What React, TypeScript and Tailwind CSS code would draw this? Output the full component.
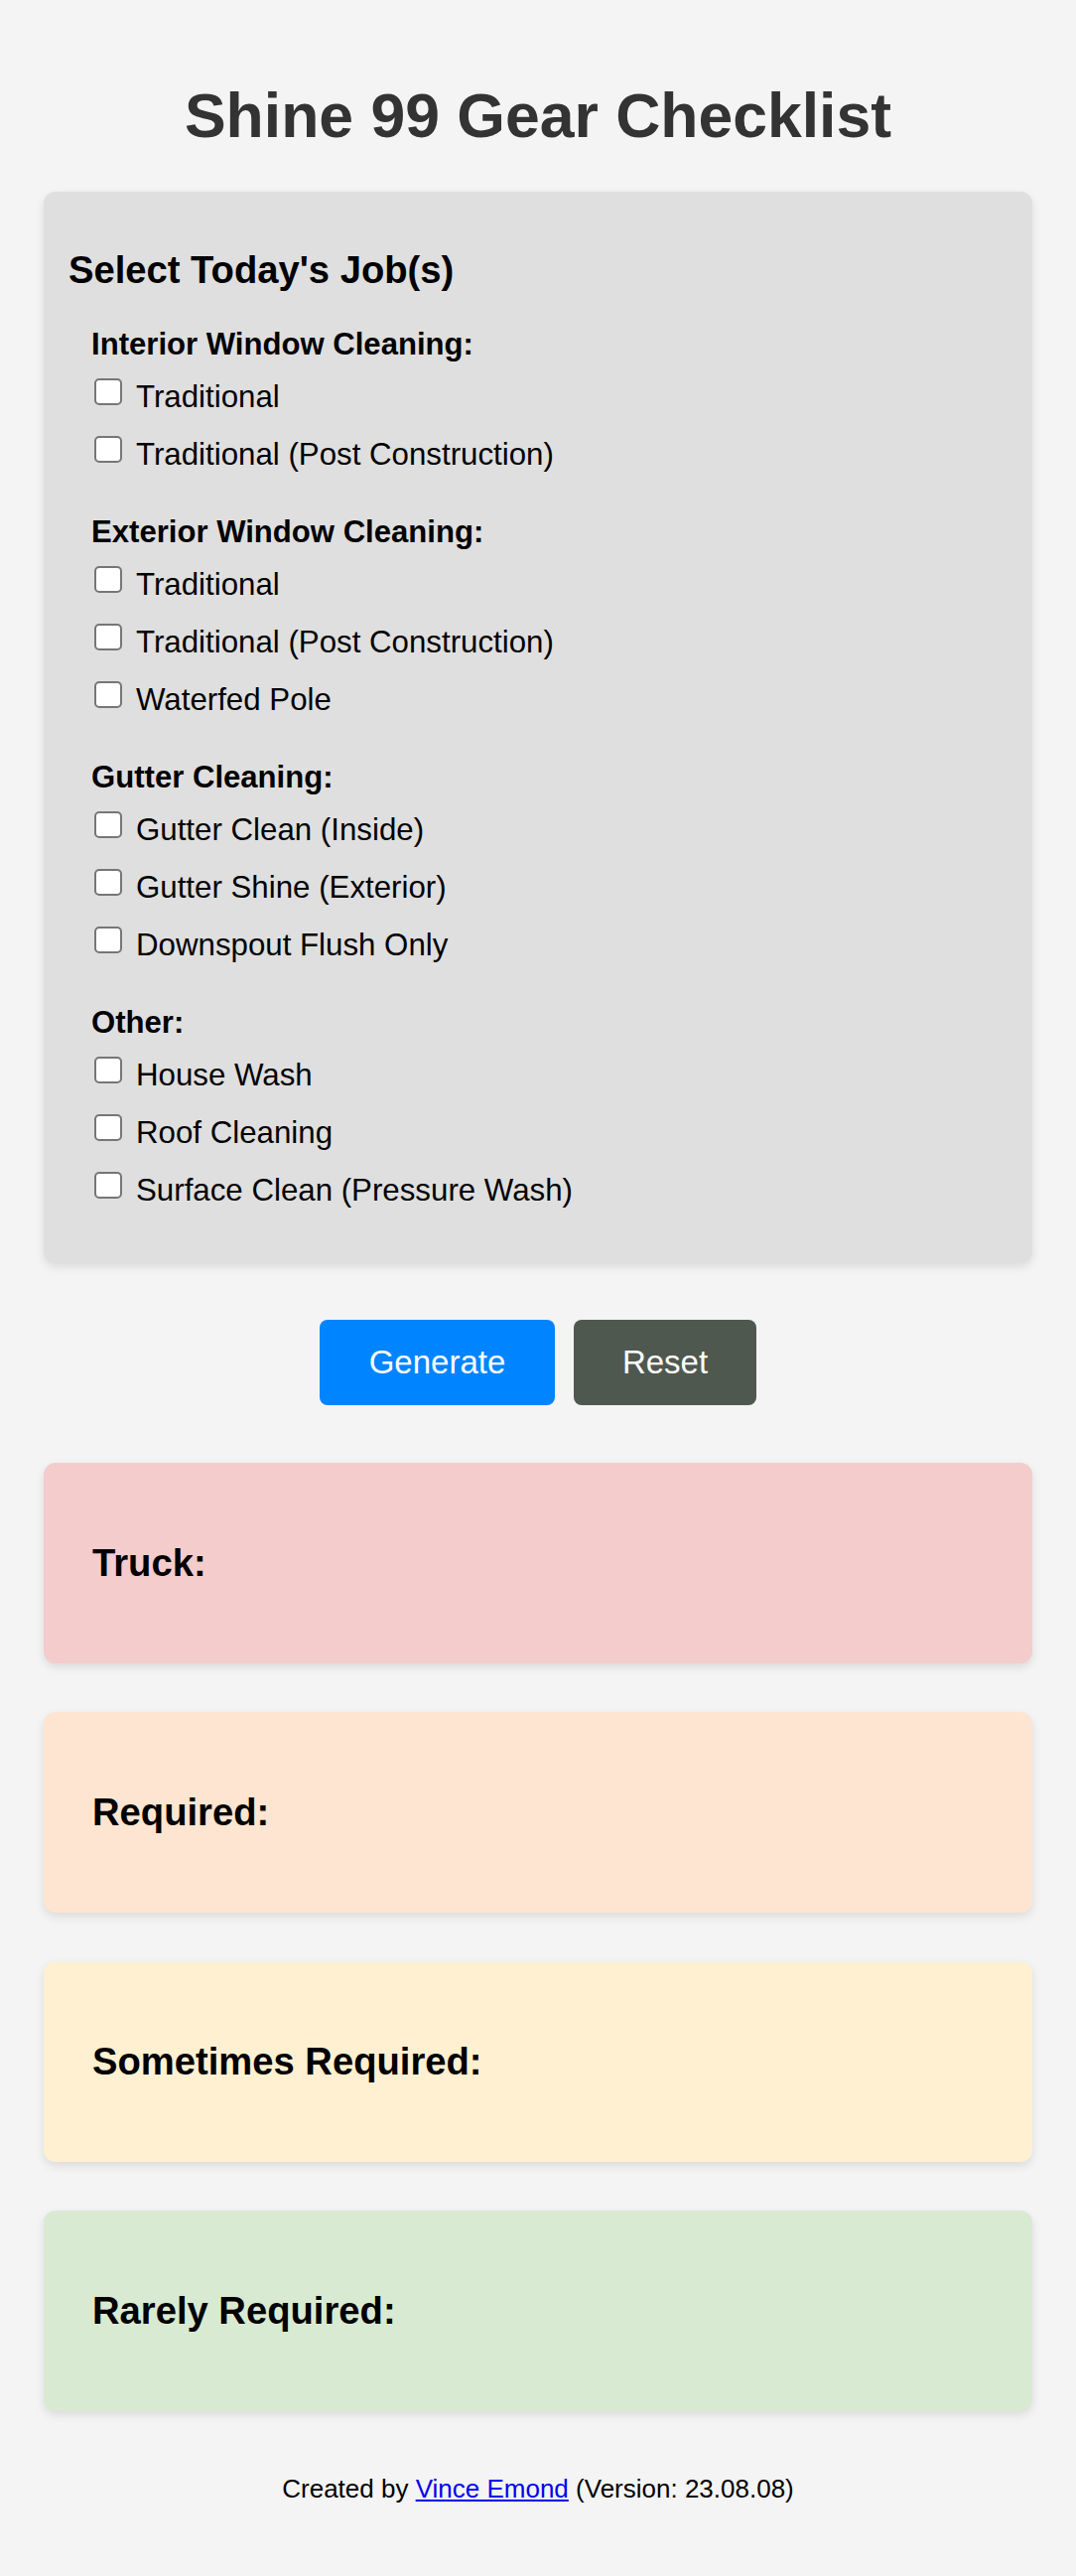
import React, { useState } from 'react';

type Group = { title: string; items: string[] };

const groups: Group[] = [
  { title: 'Interior Window Cleaning:', items: ['Traditional', 'Traditional (Post Construction)'] },
  { title: 'Exterior Window Cleaning:', items: ['Traditional', 'Traditional (Post Construction)', 'Waterfed Pole'] },
  { title: 'Gutter Cleaning:', items: ['Gutter Clean (Inside)', 'Gutter Shine (Exterior)', 'Downspout Flush Only'] },
  { title: 'Other:', items: ['House Wash', 'Roof Cleaning', 'Surface Clean (Pressure Wash)'] },
];

const results = [
  { label: 'Truck:', bg: 'bg-[#f4cccc]' },
  { label: 'Required:', bg: 'bg-[#fde5d1]' },
  { label: 'Sometimes Required:', bg: 'bg-[#fff0d2]' },
  { label: 'Rarely Required:', bg: 'bg-[#d9ead3]' },
];

const CheckItem = ({ label, checked, onToggle }: { label: string; checked: boolean; onToggle: () => void }) => (
  <label className="flex items-start cursor-pointer leading-[36px] text-[31.25px] text-black">
    <span
      onClick={onToggle}
      className={`mt-[-1px] ml-[3px] mr-[14px] h-[27px] w-[28px] shrink-0 rounded-[5px] border-2 border-[#767676] ${checked ? 'bg-[#0075ff]' : 'bg-white'}`}
    ></span>
    <span>{label}</span>
  </label>
);

export default function App() {
  const [checked, setChecked] = useState<Record<string, boolean>>({});

  const toggle = (key: string) => setChecked((c) => ({ ...c, [key]: !c[key] }));

  return (
    <div className="min-h-screen bg-[#f4f4f4] font-['Liberation_Sans',Arial,sans-serif] px-[44px] pt-[80px] pb-[72px]">
      {/* Title */}
      <h1 className="text-center text-[62.5px] leading-[72px] font-bold text-[#333]">Shine 99 Gear Checklist</h1>

      {/* Job selection card */}
      <div className="mt-[41px] rounded-[12px] bg-[#dfdfdf] shadow-[0_4px_10px_rgba(0,0,0,0.1)] pl-[25px] pt-[57px] pb-[55px]">
        <h2 className="text-[38.2px] leading-[44px] font-bold text-black">Select Today's Job(s)</h2>
        <div className="ml-[23px] mt-[35px] flex flex-col gap-[42px]">
          {groups.map((g) => (
            <div key={g.title} className="flex flex-col">
              <h3 className="text-[31.1px] leading-[36px] font-bold text-black">{g.title}</h3>
              <div className="mt-[17px] flex flex-col gap-[22px]">
                {g.items.map((item) => {
                  const key = g.title + item;
                  return <CheckItem key={key} label={item} checked={!!checked[key]} onToggle={() => toggle(key)} />;
                })}
              </div>
            </div>
          ))}
        </div>
      </div>

      {/* Buttons */}
      <div className="mt-[57px] flex justify-center gap-[19px]">
        <button className="h-[86px] w-[237px] rounded-[8px] bg-[#0084ff] text-[33px] text-white">Generate</button>
        <button onClick={() => setChecked({})} className="h-[86px] w-[184px] rounded-[8px] bg-[#4f584f] text-[33px] text-white">
          Reset
        </button>
      </div>

      {/* Result cards */}
      <div className="mt-[58px] flex flex-col gap-[49px]">
        {results.map((r) => (
          <div
            key={r.label}
            className={`flex h-[202px] items-center rounded-[12px] px-[49px] shadow-[0_4px_10px_rgba(0,0,0,0.1)] ${r.bg}`}
          >
            <h2 className="text-[38.2px] leading-[44px] font-bold text-black">{r.label}</h2>
          </div>
        ))}
      </div>

      {/* Footer */}
      <p className="mt-[63px] text-center text-[26px] leading-[30px] text-black">
        Created by{' '}
        <a href="#" className="text-[#0000ee] underline">
          Vince Emond
        </a>{' '}
        (Version: 23.08.08)
      </p>
    </div>
  );
}
